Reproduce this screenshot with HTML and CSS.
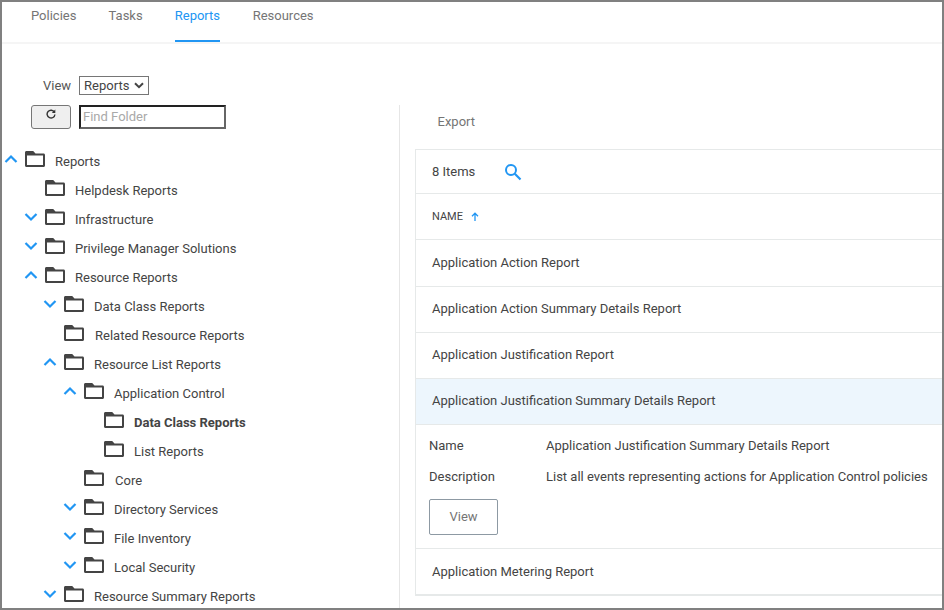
FILE: index.html
```html
<!DOCTYPE html>
<html lang="en">
<head>
    <meta charset="UTF-8" />
    <meta name="viewport" content="width=device-width, initial-scale=1.0" />
    <title>Reports</title>
    <link rel="stylesheet" href="styles.css">
</head>
<body>
    <svg class="defs" width="0" height="0">
        <symbol id="folder" viewBox="0 0 20 16">
            <path d="M0 1.500C0 .6.600 0 1.500 0h6.700l2.300 2.500h8C19.400 2.500 20 3.100 20 4v10.500c0 .9-.6 1.500-1.500 1.500h-17C.6 16 0 15.400 0 14.500z" fill="#444"/>
            <rect x="2" y="4.500" width="16" height="9.500" fill="#fff"/>
        </symbol>
        <symbol id="up" viewBox="0 0 14 10">
            <path d="M1.500 8 7 2.500 12.500 8" fill="none" stroke="#2196f3" stroke-width="2.200"/>
        </symbol>
        <symbol id="down" viewBox="0 0 14 10">
            <path d="M1.500 2 7 7.500 12.500 2" fill="none" stroke="#2196f3" stroke-width="2.200"/>
        </symbol>
    </svg>

    <div class="frame">
        <nav class="tabs">
            <a class="tab">Policies</a>
            <a class="tab">Tasks</a>
            <a class="tab active">Reports</a>
            <a class="tab">Resources</a>
        </nav>

        <div class="main">
            <aside class="sidebar">
                <div class="view-row">
                    <label class="view-label" for="view">View</label>
                    <div class="select">Reports
                        <svg width="10" height="7" viewBox="0 0 10 7"><path d="M1 1.200 5 5.200 9 1.200" fill="none" stroke="#444" stroke-width="2"/></svg>
                    </div>
                </div>
                <div class="find-row">
                    <button class="refresh" aria-label="Refresh">
                        <svg width="10" height="10" viewBox="0 0 10 10"><path d="M8.400 3.200A3.900 3.900 0 1 0 8.900 5.500" fill="none" stroke="#333" stroke-width="1.400"/><path d="M9.300 0.500V4H5.800z" fill="#333"/></svg>
                    </button>
                    <input class="find" type="text" placeholder="Find Folder" />
                </div>

                <ul class="tree">
                    <li class="node"><svg class="chevron"><use href="#up"/></svg><svg class="folder"><use href="#folder"/></svg><span>Reports</span></li>
                    <li class="node level-1"><span class="chevron"></span><svg class="folder"><use href="#folder"/></svg><span>Helpdesk Reports</span></li>
                    <li class="node level-1"><svg class="chevron"><use href="#down"/></svg><svg class="folder"><use href="#folder"/></svg><span>Infrastructure</span></li>
                    <li class="node level-1"><svg class="chevron"><use href="#down"/></svg><svg class="folder"><use href="#folder"/></svg><span>Privilege Manager Solutions</span></li>
                    <li class="node level-1"><svg class="chevron"><use href="#up"/></svg><svg class="folder"><use href="#folder"/></svg><span>Resource Reports</span></li>
                    <li class="node level-2"><svg class="chevron"><use href="#down"/></svg><svg class="folder"><use href="#folder"/></svg><span>Data Class Reports</span></li>
                    <li class="node level-2"><span class="chevron"></span><svg class="folder"><use href="#folder"/></svg><span class="leaf">Related Resource Reports</span></li>
                    <li class="node level-2"><svg class="chevron"><use href="#up"/></svg><svg class="folder"><use href="#folder"/></svg><span>Resource List Reports</span></li>
                    <li class="node level-3"><svg class="chevron"><use href="#up"/></svg><svg class="folder"><use href="#folder"/></svg><span>Application Control</span></li>
                    <li class="node level-4"><span class="chevron"></span><svg class="folder"><use href="#folder"/></svg><span class="selected">Data Class Reports</span></li>
                    <li class="node level-4"><span class="chevron"></span><svg class="folder"><use href="#folder"/></svg><span>List Reports</span></li>
                    <li class="node level-3"><span class="chevron"></span><svg class="folder"><use href="#folder"/></svg><span class="leaf">Core</span></li>
                    <li class="node level-3"><svg class="chevron"><use href="#down"/></svg><svg class="folder"><use href="#folder"/></svg><span>Directory Services</span></li>
                    <li class="node level-3"><svg class="chevron"><use href="#down"/></svg><svg class="folder"><use href="#folder"/></svg><span>File Inventory</span></li>
                    <li class="node level-3"><svg class="chevron"><use href="#down"/></svg><svg class="folder"><use href="#folder"/></svg><span>Local Security</span></li>
                    <li class="node level-2"><svg class="chevron"><use href="#down"/></svg><svg class="folder"><use href="#folder"/></svg><span>Resource Summary Reports</span></li>
                </ul>
            </aside>

            <section class="content">
                <div class="toolbar"><a class="export">Export</a></div>
                <div class="panel">
                    <div class="panel-head">
                        <span>8 Items</span>
                        <svg class="search" width="18" height="18" viewBox="0 0 18 18"><circle cx="7" cy="7" r="5" fill="none" stroke="#2196f3" stroke-width="2"/><path d="M10.800 10.800 16.500 16.500" stroke="#2196f3" stroke-width="2.200"/></svg>
                    </div>
                    <div class="col-head">
                        <span>NAME</span>
                        <svg width="8" height="9" viewBox="0 0 8 9"><path d="M4 9V1.500M1 4.200 4 1.200 7 4.200" fill="none" stroke="#2196f3" stroke-width="1.300"/></svg>
                    </div>
                    <div class="row first">Application Action Report</div>
                    <div class="row">Application Action Summary Details Report</div>
                    <div class="row">Application Justification Report</div>
                    <div class="row open">Application Justification Summary Details Report</div>
                    <div class="details">
                        <dl class="fields">
                            <dt>Name</dt>
                            <dd>Application Justification Summary Details Report</dd>
                            <dt>Description</dt>
                            <dd>List all events representing actions for Application Control policies</dd>
                        </dl>
                        <button class="view-btn">View</button>
                    </div>
                    <div class="row last">Application Metering Report</div>
                </div>
            </section>
        </div>
    </div>
</body>
</html>
```

FILE: styles.css
```css
* {
    box-sizing: border-box;
}

body {
    margin: 0;
    background-color: white;
    color: #444;
    font-family: Roboto, "Liberation Sans", sans-serif;
    font-size: 13px;
}

.defs {
    position: absolute;
}

.frame {
    width: 944px;
    height: 610px;
    border: 2px solid #808080;
    display: flex;
    flex-direction: column;
    overflow: hidden;
}

.tabs {
    flex: none;
    height: 42px;
    padding-left: 29px;
    display: flex;
    gap: 32.1px;
    border-bottom: 2px solid #f5f5f5;
}

.tab {
    height: 40px;
    padding-top: 6px;
    color: #757575;
}

.tab:last-child {
    margin-left: 0.5px;
}

.tab.active {
    color: #2196f3;
    border-bottom: 2px solid #2196f3;
}

.main {
    flex: 1;
    display: flex;
    min-height: 0;
}

.sidebar {
    flex: none;
    width: 397px;
    padding-top: 32px;
}

.view-row {
    display: flex;
    align-items: center;
    padding-left: 41px;
    gap: 8px;
    height: 19px;
}

.view-label {
    color: #555;
}

.select {
    width: 70px;
    height: 19px;
    border: 1px solid #767676;
    padding-left: 4px;
    display: flex;
    align-items: center;
    gap: 5px;
    line-height: 17px;
    white-space: nowrap;
}

.find-row {
    display: flex;
    gap: 8px;
    padding-left: 29px;
    margin-top: 10px;
    height: 24px;
}

.refresh {
    width: 40px;
    height: 24px;
    padding: 0 0 6px;
    background-color: #efefef;
    border: 1px solid #767676;
    border-radius: 3px;
}

.find {
    width: 147px;
    height: 24px;
    padding: 0 2px 2px;
    border: 2px solid;
    border-color: #222 #666 #666 #222;
    font: inherit;
    outline: none;
}

.find::placeholder {
    color: #a9a9a9;
}

.tree {
    list-style: none;
    margin: 18px 0 0;
    padding: 0;
}

.node {
    height: 29px;
    display: flex;
    align-items: center;
    padding-left: 2px;
    white-space: nowrap;
}

.level-1 { padding-left: 22px; }
.level-2 { padding-left: 41px; }
.level-3 { padding-left: 61px; }
.level-4 { padding-left: 81px; }

.chevron {
    flex: none;
    width: 14px;
    height: 10px;
    margin-right: 7px;
    margin-top: -5px;
}

.folder {
    flex: none;
    width: 20px;
    height: 16px;
    margin-right: 10px;
    margin-top: -6px;
}

.leaf {
    margin-left: 1px;
}

.selected {
    font-weight: 700;
}

.content {
    flex: 1;
    margin-top: 61px;
    padding-left: 15px;
    border-left: 1px solid #e6e6e6;
    min-width: 0;
}

.toolbar {
    height: 44px;
    padding: 9px 0 0 22.5px;
}

.export {
    color: #757575;
}

.panel {
    width: 560px;
    border: 1px solid #e6e9e9;
}

.panel-head {
    height: 44px;
    padding-left: 16px;
    display: flex;
    align-items: center;
    gap: 29px;
    border-bottom: 1px solid #e6e9e9;
}

.search {
    margin-top: 1px;
}

.col-head {
    height: 46px;
    padding-left: 16px;
    display: flex;
    align-items: center;
    gap: 8px;
    font-size: 11px;
    border-bottom: 1px solid #e6e9e9;
}

.row {
    height: 46px;
    padding: 0 16px 2px;
    display: flex;
    align-items: center;
    border-bottom: 1px solid #e6e9e9;
}

.row.first {
    height: 47px;
}

.row.last {
    padding-bottom: 0;
}

.row.open {
    background-color: #edf6fd;
}

.details {
    padding: 13px 13px 13px;
    border-bottom: 1px solid #e6e9e9;
}

.fields {
    margin: 0;
    display: grid;
    grid-template-columns: 117px 1fr;
    row-gap: 16px;
    line-height: 15px;
}

.fields dd {
    margin: 0;
    white-space: nowrap;
}

.view-btn {
    display: block;
    width: 69px;
    height: 36px;
    margin-top: 15px;
    padding-bottom: 3px;
    background-color: white;
    border: 1px solid #8d99a3;
    border-radius: 2px;
    color: #757575;
    font: inherit;
}
```
